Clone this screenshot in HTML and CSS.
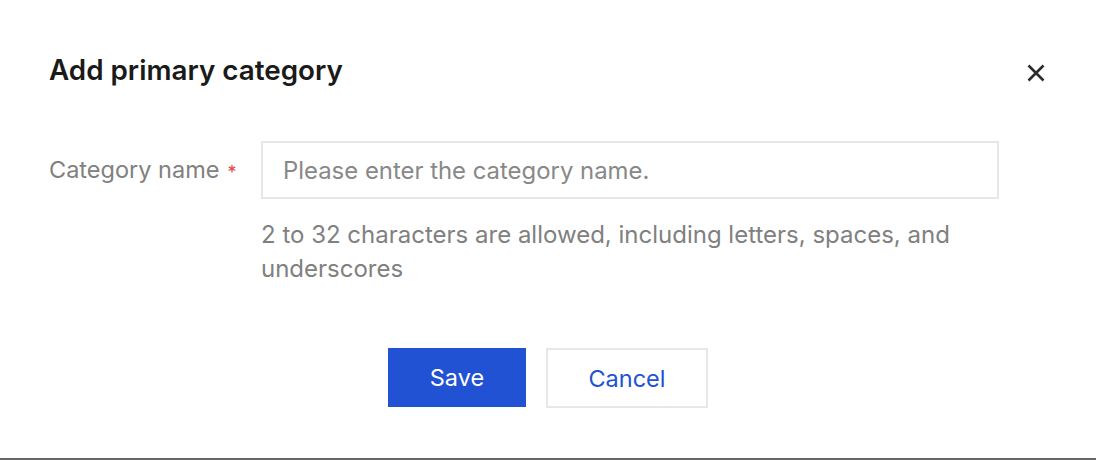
FILE: index.html
```html
<!DOCTYPE html>
<html>
<head>
<meta charset="utf-8">
<link rel="stylesheet" href="styles.css">
</head>
<body>
<div class="dialog">
  <div class="header">
    <h2 class="title">Add primary category</h2>
    <button class="close" aria-label="Close">
      <svg width="18" height="18" viewBox="0 0 18 18"><path d="M1.5 1.5 L16.5 16.5 M16.5 1.5 L1.5 16.5" stroke="#2b2b2b" stroke-width="2.6" stroke-linecap="butt"/></svg>
    </button>
  </div>
  <div class="form">
    <div class="row">
      <label class="label">Category name<span class="req">*</span></label>
      <div class="field">
        <input class="input" type="text" placeholder="Please enter the category name.">
        <p class="help">2 to 32 characters are allowed, including letters, spaces, and underscores</p>
      </div>
    </div>
  </div>
  <div class="footer">
    <button class="btn primary">Save</button>
    <button class="btn default">Cancel</button>
  </div>
</div>
</body>
</html>
```

FILE: styles.css
```css
html, body {
  margin: 0;
  padding: 0;
  background: #ffffff;
}
body {
  width: 1096px;
  height: 460px;
  overflow: hidden;
  font-family: Inter, "Noto Sans", sans-serif;
  border-bottom: 2px solid #666666;
  box-sizing: border-box;
}
.dialog {
  padding: 52px 49px 0 49px;
}
.header {
  display: flex;
  justify-content: space-between;
  align-items: center;
}
.title {
  margin: 0;
  font-size: 27.8px;
  line-height: 36px;
  font-weight: 600;
  color: #1a1a1a;
}
.close {
  border: 0;
  background: none;
  padding: 0;
  margin: 6px 2px 0 0;
  width: 18px;
  height: 18px;
  display: flex;
}
.form {
  margin-top: 53px;
}
.row {
  display: flex;
}
.label {
  width: 212px;
  flex: none;
  font-size: 23.5px;
  line-height: 58px;
  color: #808080;
  white-space: nowrap;
}
.req {
  color: #e54545;
  font-size: 18px;
  margin-left: 8px;
  vertical-align: -1px;
}
.field {
  width: 738px;
}
.input {
  box-sizing: border-box;
  width: 738px;
  height: 58px;
  border: 2px solid #e6e6eb;
  padding: 0 20px;
  font-family: inherit;
  font-size: 23.9px;
  color: #333;
  outline: none;
  margin: 0;
  display: block;
}
.input::placeholder {
  color: #888888;
}
.help {
  margin: 19px 0 0 0;
  font-size: 24px;
  line-height: 34px;
  color: #808080;
}
.footer {
  display: flex;
  justify-content: center;
  gap: 20px;
  margin-top: 62px;
}
.btn {
  font-family: inherit;
  font-size: 23.5px;
  height: 60px;
  box-sizing: border-box;
  cursor: pointer;
  padding: 0;
}
.primary {
  width: 138px;
  background: #2152d3;
  color: #ffffff;
  border: 0;
  height: 59px;
}
.default {
  width: 162px;
  background: #ffffff;
  color: #2152d3;
  border: 2px solid #e6e6eb;
}
```
